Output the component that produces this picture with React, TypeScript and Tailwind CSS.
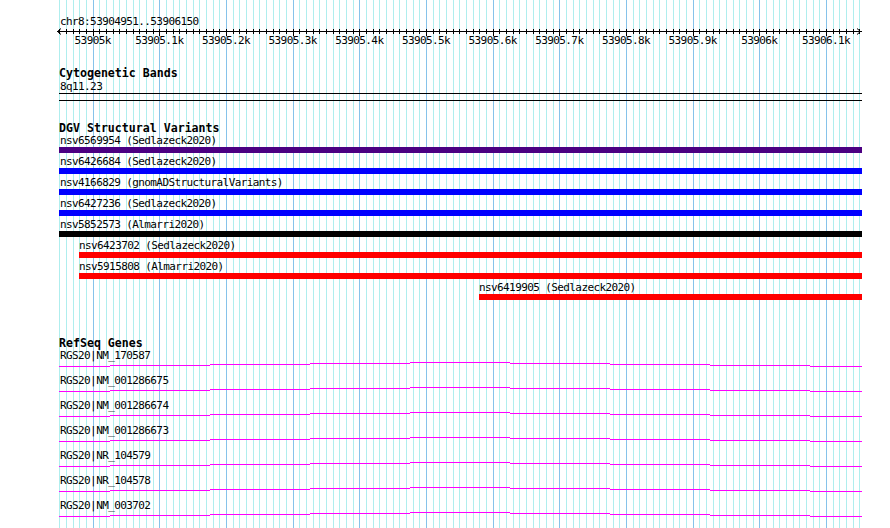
import React from "react";

// view: chr8:53904951..53906150 drawn over 800px starting at x=60
const GRID_LINES = Array.from({ length: 121 }, (_, k) => ({
  x: Math.round(59.333 + (k * 20) / 3) + 0.5,
  major: (k - 5) % 10 === 0,
}));

const TICK_LABELS = [
  "53905k",
  "53905.1k",
  "53905.2k",
  "53905.3k",
  "53905.4k",
  "53905.5k",
  "53905.6k",
  "53905.7k",
  "53905.8k",
  "53905.9k",
  "53906k",
  "53906.1k",
];

const variants = [
  { name: "nsv6569954 (Sedlazeck2020)", start: 0, color: "bg-[#4b0082]" },
  { name: "nsv6426684 (Sedlazeck2020)", start: 0, color: "bg-[#0000ff]" },
  { name: "nsv4166829 (gnomADStructuralVariants)", start: 0, color: "bg-[#0000ff]" },
  { name: "nsv6427236 (Sedlazeck2020)", start: 0, color: "bg-[#0000ff]" },
  { name: "nsv5852573 (Almarri2020)", start: 0, color: "bg-black" },
  { name: "nsv6423702 (Sedlazeck2020)", start: 20, color: "bg-[#ff0000]" },
  { name: "nsv5915808 (Almarri2020)", start: 20, color: "bg-[#ff0000]" },
  { name: "nsv6419905 (Sedlazeck2020)", start: 420, color: "bg-[#ff0000]" },
];

const genes = [
  "RGS20|NM_170587",
  "RGS20|NM_001286675",
  "RGS20|NM_001286674",
  "RGS20|NM_001286673",
  "RGS20|NR_104579",
  "RGS20|NR_104578",
  "RGS20|NM_003702",
];

// gene line steps (x from, x to, y offset)
const SEGMENTS: [number, number, number][] = [
  [0, 51, 4],
  [51, 151, 3],
  [151, 251, 2],
  [251, 351, 1],
  [351, 451, 0],
  [451, 551, 1],
  [551, 651, 2],
  [651, 751, 3],
  [751, 803, 4],
];

const Grid = () => (
  <svg
    className="absolute inset-0 pointer-events-none"
    width={890}
    height={528}
    shapeRendering="crispEdges"
  >
    {GRID_LINES.map((l, i) => (
      <line
        key={i}
        x1={l.x}
        x2={l.x}
        y1={0}
        y2={528}
        stroke={l.major ? "#86c3ea" : "#afeeee"}
        strokeWidth={1}
      />
    ))}
  </svg>
);

const Axis = () => (
  <div className="relative">
    <svg
      className="block -ml-[59px]"
      width={890}
      height={8}
      shapeRendering="crispEdges"
    >
      <line x1={57} x2={862} y1={3.5} y2={3.5} stroke="#000" />
      {GRID_LINES.map((l, i) => (
        <line
          key={i}
          x1={l.x}
          x2={l.x}
          y1={1}
          y2={l.major ? 8 : 6}
          stroke="#000"
        />
      ))}
      <polyline points="61,0.5 57.5,3.5 61,6.5" fill="none" stroke="#000" shapeRendering="auto" />
      <polyline points="857,0.5 860.5,3.5 857,6.5" fill="none" stroke="#000" shapeRendering="auto" />
    </svg>
    <div className="relative h-[13px] -mt-[2px]">
      {TICK_LABELS.map((t, k) => (
        <span
          key={t}
          className="absolute top-0 -translate-x-1/2 leading-[13px] whitespace-nowrap"
          style={{ left: 92.67 + k * 66.667 - 59 }}
        >
          {t}
        </span>
      ))}
    </div>
  </div>
);

const Title = ({ children }: { children: React.ReactNode }) => (
  <div className="h-[13px] leading-[13px] text-[11.6px] font-bold tracking-normal whitespace-nowrap">
    {children}
  </div>
);

export default function App() {
  return (
    <div className="relative w-[890px] h-[528px] bg-white overflow-hidden text-black font-['DejaVu_Sans_Mono',monospace] text-[11px] tracking-[-0.6px]">
      <Grid />
      <div className="relative ml-[59px] w-[803px] pt-[15px] flex flex-col">
        <div className="h-[13px] leading-[13px] pl-px">chr8:53904951..53906150</div>
        <Axis />

        {/* Cytogenetic Bands */}
        <div className="mt-[20px]">
          <Title>Cytogenetic Bands</Title>
        </div>
        <div className="h-[13px] leading-[13px] pl-px">8q11.23</div>
        <div className="h-[8px] border-y border-black" />

        {/* DGV Structural Variants */}
        <div className="mt-[21px]">
          <Title>DGV Structural Variants</Title>
        </div>
        <div className="flex flex-col">
          {variants.map((v) => (
            <div
              key={v.name}
              className="h-[21px] flex flex-col"
              style={{ marginLeft: v.start }}
            >
              <div
                className={`h-[12px] leading-[12px] whitespace-nowrap ${
                  v.start === 0 ? "pl-px" : ""
                }`}
              >
                {v.name}
              </div>
              <div className={`h-[6px] ${v.color}`} />
            </div>
          ))}
        </div>

        {/* RefSeq Genes */}
        <div className="mt-[34px]">
          <Title>RefSeq Genes</Title>
        </div>
        <div className="flex flex-col">
          {genes.map((g) => (
            <div key={g} className="h-[25px] flex flex-col">
              <div className="h-[12px] leading-[12px] pl-px whitespace-nowrap">{g}</div>
              <svg className="block" width={803} height={6} shapeRendering="crispEdges">
                {SEGMENTS.map(([a, b, y], i) => (
                  <rect key={i} x={a} y={y} width={b - a} height={1} fill="#ff00ff" />
                ))}
              </svg>
            </div>
          ))}
        </div>
      </div>
    </div>
  );
}
